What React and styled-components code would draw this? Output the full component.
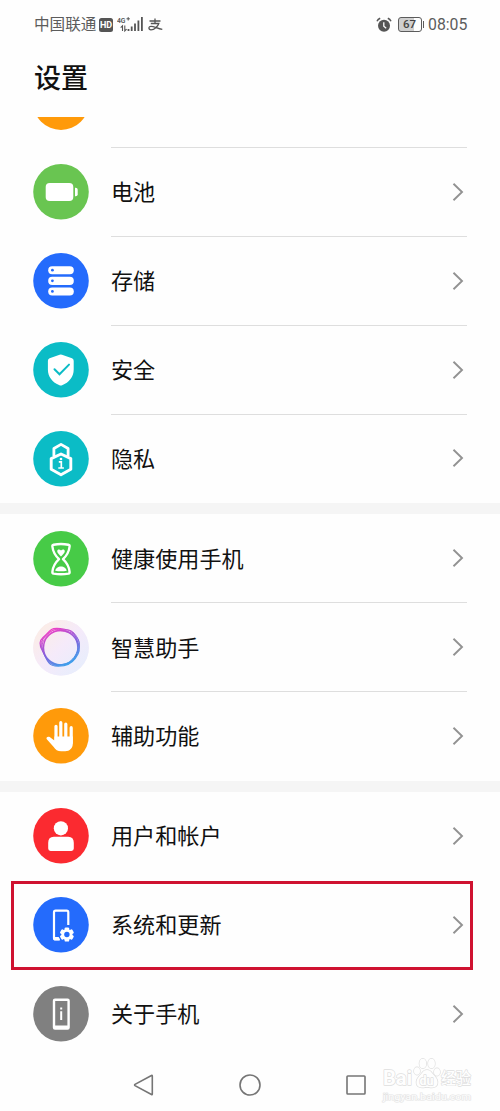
import React from 'react';
import styled, { createGlobalStyle } from 'styled-components';

const GlobalStyle = createGlobalStyle`
	* {
		box-sizing: border-box;
	}
	body {
		margin: 0;
		background: #fefefe;
		font-family: Roboto, 'Noto Sans CJK SC', sans-serif;
	}
	svg {
		display: block;
		flex: none;
	}
`;

const BatteryIcon = () => (
	<g fill='#fff'>
		<rect x='12.7' y='19' width='27.6' height='18' rx='4' />
		<path d='M42 23.7h.7q2 0 2 2v4.6q0 2-2 2h-.7z' />
	</g>
);

const StorageIcon = () => (
	<>
		{[13.2, 23.8, 34.4].map((y) => (
			<g key={y}>
				<rect x='15.2' y={y} width='25.6' height='8.1' rx='4' fill='#fff' />
				<circle cx='19.4' cy={y + 4} r='1.4' fill='#246bfc' />
			</g>
		))}
	</>
);

const ShieldIcon = () => (
	<>
		<path
			d='M26.6 12.7q1.2-.6 2.4 0l10 3.6q1.7.6 1.7 2.4v8.8c0 7.4-4.6 12.9-11.6 15.8q-1.3.5-2.6 0C19.5 40.4 14.9 34.9 14.9 27.5v-8.8q0-1.8 1.7-2.4z'
			fill='#fff'
		/>
		<path
			d='M21.5 27.3l5 5L36 22.6'
			fill='none'
			stroke='#0bbcc6'
			strokeWidth='2'
			strokeLinecap='round'
		/>
	</>
);

const PrivacyIcon = () => (
	<g fill='none' stroke='#fff' strokeWidth='2.8' strokeLinejoin='round'>
		<path d='M20.9 25v-7.5L28 13.4l7.1 4.1V25' />
		<path d='M28 23l9.8 4.6v10.6L28 43.7l-9.8-5.5V27.6z' strokeWidth='2.9' />
		<path d='M25.8 30.9h2.5v6M25.3 37h5.6' strokeWidth='1.7' strokeLinejoin='miter' />
		<circle cx='28' cy='28' r='1.3' fill='#fff' stroke='none' />
	</g>
);

const HourglassIcon = () => (
	<>
		<path
			d='M20.6 13.7Q28 12.3 35.4 13.7Q36.8 14 36.6 15.5C36 21.5 33 25.3 30 28.2C33 31 36 35 36.6 40.8Q36.8 42.3 35.4 42.6Q28 43.9 20.6 42.6Q19.2 42.3 19.4 40.8C20 35 23 31 26 28.2C23 25.3 20 21.5 19.4 15.5Q19.2 14 20.6 13.7z'
			fill='none'
			stroke='#fff'
			strokeWidth='2.4'
			strokeLinejoin='round'
		/>
		<path
			d='M28 25.5c-1-1.5-3.8-3.2-3.8-5.3 0-2 2.5-2.3 3.8-.6 1.3-1.7 3.8-1.4 3.8.6 0 2.1-2.8 3.8-3.8 5.3zM22.3 39.8c0-2.1 3-4.2 5.7-4.2s5.7 2.1 5.7 4.2q-5.7 1-11.4 0z'
			fill='#fff'
		/>
	</>
);

const AssistantIcon = () => (
	<>
		<defs>
			<linearGradient id='orb' x1='0' y1='0' x2='1' y2='1'>
				<stop offset='0' stopColor='#fdeee0' />
				<stop offset='.5' stopColor='#f5eafa' />
				<stop offset='1' stopColor='#e3effd' />
			</linearGradient>
			<linearGradient id='ring' gradientUnits='userSpaceOnUse' x1='17' y1='10' x2='36' y2='46'>
				<stop offset='0' stopColor='#ee3fc6' />
				<stop offset='.5' stopColor='#8560dc' />
				<stop offset='1' stopColor='#35a5ec' />
			</linearGradient>
		</defs>
		<circle cx='28' cy='27.8' r='27.8' fill='url(#orb)' />
		<g fill='none' stroke='url(#ring)' strokeWidth='.9'>
			<circle cx='27.7' cy='27.7' r='17.2' strokeWidth='1.4' />
			<path
				d='M18.5 9.5C22 7 28 8.5 33 9.5C39 10.5 42 14 43.5 19C46 25 47.5 29 45 34C42 40 38 44.5 31 45.7C25 46.5 19 47 16 43C13 39 12 35 9.5 31C6.5 26 6 21 10 17.5C14 14 15 12 18.5 9.5z'
				strokeWidth='1.2'
			/>
			<path d='M17 12C22 8 29 10 34 9.800C40 10 43 15 45.500 20C48 26 44.500 33 42.500 37C39 42 35 46 28 44.500C22 45.500 18 44.500 14.500 40C11.500 36 10.500 32 8.500 27C6.500 21 12 15 17 12z' />
			<path d='M19.5 10.5C24 8 30 9.5 35 11.5C40 13 45 17 46.2 23C47 29 43 35 40 40C36 44 29 44 24 45.6C18 45 14 41 12 36C9 30 8 25 9.5 20C12 16 16 13 19.5 10.5z' />
			<path d='M20 12C25 9.5 30 11 35 12.3C40 14 44.5 19 45 25C45.5 31 42 37 38 40.5C34 44.5 28 46.5 22 44.5C16 43 13 38 10.5 33C8 27 9 22 12.5 18C14.5 15 17 13.5 20 12z' />
		</g>
	</>
);

const HandIcon = () => (
	<>
		<path
			d='M23 18.3v15M27.8 14.7v15M32.8 16v15M38.2 19.7v15'
			stroke='#fff'
			strokeWidth='3.2'
			strokeLinecap='round'
		/>
		<path
			d='M21.4 28.5h18.4v7c0 4.7-3 7.7-7.6 7.7h-4c-3.6 0-5.8-1.5-7.5-4.3L13.8 31.3c-1.2-1.7.9-3.4 2.9-2.3l4.7 3.5z'
			fill='#fff'
		/>
	</>
);

const UserIcon = () => (
	<g fill='#fff'>
		<circle cx='27.9' cy='20.3' r='7.1' />
		<path d='M20.8 28.8h14.4q5.6 0 5.6 6v5.8q0 2.4-2.4 2.4H17.6q-2.4 0-2.4-2.4v-5.8q0-6 5.6-6z' />
	</g>
);

const SystemIcon = () => (
	<>
		<path
			d='M35.3 28V15.2q0-1.6-1.6-1.6H22.6q-1.6 0-1.6 1.6v25.7q0 1.6 1.6 1.6H26.5'
			fill='none'
			stroke='#fff'
			strokeWidth='2.2'
		/>
		<path d='M20.5 40h5.2l1.5 3.3h-5.2q-1.5 0-1.5-1.5z' fill='#fff' />
		{[0, 60, 120].map((deg) => (
			<rect
				key={deg}
				x='31.6'
				y='30.4'
				width='4.6'
				height='14.2'
				rx='1.2'
				fill='#fff'
				transform={`rotate(${deg} 33.9 37.5)`}
			/>
		))}
		<circle cx='33.9' cy='37.5' r='5.5' fill='#fff' />
		<circle cx='33.9' cy='37.5' r='2.7' fill='#246bfc' />
	</>
);

const AboutIcon = () => (
	<>
		<path
			fillRule='evenodd'
			d='M22 12.5h12.6q2.2 0 2.2 2.2v26.8q0 2.2-2.2 2.2H22q-2.2 0-2.2-2.2V14.7q0-2.2 2.2-2.2zM22.2 15v24.6h12.2V15z'
			fill='#fff'
		/>
		<path d='M27.2 25.2h2V34h-2zM27.2 21.6h2v2h-2z' fill='#fff' />
	</>
);

const groups = [
	[
		{ label: '电池', color: '#69c551', icon: BatteryIcon },
		{ label: '存储', color: '#246bfc', icon: StorageIcon },
		{ label: '安全', color: '#0bbcc6', icon: ShieldIcon },
		{ label: '隐私', color: '#0bbcc6', icon: PrivacyIcon },
	],
	[
		{ label: '健康使用手机', color: '#47cb47', icon: HourglassIcon },
		{ label: '智慧助手', color: '#f5eafa', icon: AssistantIcon },
		{ label: '辅助功能', color: '#ff9a0a', icon: HandIcon },
	],
	[
		{ label: '用户和帐户', color: '#fb2a30', icon: UserIcon, plain: true },
		{ label: '系统和更新', color: '#246bfc', icon: SystemIcon, plain: true, marked: true },
		{ label: '关于手机', color: '#808080', icon: AboutIcon, plain: true },
	],
];

function Status() {
	return (
		<StatusBar>
			<StatusGroup>
				<Carrier>中国联通</Carrier>
				<HdBadge>HD</HdBadge>
				<svg width='27' height='17' viewBox='0 0 27 17'>
					<text x='0' y='6.8' fontSize='8' fontWeight='600' fill='#555' textLength='8.5' lengthAdjust='spacingAndGlyphs'>4G</text>
					<path d='M9.5 2.8h3.4M11.2 1.1v3.4' stroke='#555' strokeWidth='1' />
					<path d='M5.500 15V9.800l-1.800 1.800M7.800 9.600V15l1.800-1.800' fill='none' stroke='#555' strokeWidth='1.1' />
					<path d='M11.5 15v-2M14.7 15v-4.5M18 15V7.5M21.4 15V4.5M24.9 15V1' stroke='#555' strokeWidth='1.8' />
				</svg>
				<PayMark width='15' height='13' viewBox='0 0 15 13'>
					<path d='M1.5 3h11M7 .6V5.5M2.8 5.5h8C9.8 8.5 6.5 11.8 3 11.8 .3 11.8 .2 8.3 3 8.3 6.2 8.3 9.5 10.6 14.3 11.3' />
				</PayMark>
			</StatusGroup>
			<StatusGroup>
				<svg width='16' height='16' viewBox='0 0 16 16'>
					<circle cx='8' cy='8.8' r='6' fill='#555' />
					<path d='M1 4.3Q2 2.2 4.2 1.3M15 4.3Q14 2.2 11.8 1.3' fill='none' stroke='#555' strokeWidth='1.5' />
					<path d='M7.8 5.3v3.9l2.4 2' fill='none' stroke='#fff' strokeWidth='1.3' />
				</svg>
				<Battery>
					<BatteryBody>67</BatteryBody>
					<BatteryTip />
				</Battery>
				<Time>08:05</Time>
			</StatusGroup>
		</StatusBar>
	);
}

function SettingRow({ item, last }) {
	const Icon = item.icon;
	return (
		<Row>
			<svg width='56' height='56' viewBox='0 0 56 56'>
				<circle cx='28' cy='27.8' r='27.8' fill={item.color} />
				<Icon />
			</svg>
			<RowBody $divider={!last && !item.plain}>
				<Label>{item.label}</Label>
				<svg width='12' height='20' viewBox='0 0 12 20'>
					<path d='M1.5 1.8L10 10l-8.5 8.2' fill='none' stroke='#929292' strokeWidth='1.9' />
				</svg>
			</RowBody>
			{item.marked && <Marker />}
		</Row>
	);
}

function Watermark() {
	return (
		<WatermarkBox>
			<svg width='94' height='50' viewBox='0 0 94 50'>
				<g fill='#fefefe' stroke='#dedede' strokeWidth='1.4' paintOrder='stroke' strokeLinejoin='round'>
					<text x='2' y='30.5' fontSize='20' fontWeight='700' textLength='29' lengthAdjust='spacingAndGlyphs'>Bai</text>
					<ellipse cx='36' cy='17' rx='3' ry='3.8' />
					<ellipse cx='41.8' cy='9.5' rx='3.4' ry='4.7' />
					<ellipse cx='50.5' cy='9.5' rx='3.4' ry='4.7' />
					<ellipse cx='56' cy='18' rx='3' ry='3.8' />
					<path d='M46 16c4 0 5 3.5 8 6.5 4 4.5 3.5 11-3 11-2.5 0-3.500-.5-5-.5s-2.500.5-5 .5c-6.500 0-7-6.500-3-11 3-3 4-6.500 8-6.500z' />
					<text x='38.5' y='30.5' fontSize='13' fontWeight='700' textLength='14' lengthAdjust='spacingAndGlyphs'>du</text>
					<text x='60' y='30' fontSize='16' fontWeight='500' textLength='30' lengthAdjust='spacingAndGlyphs'>经验</text>
				</g>
				<text x='2' y='45.5' fontSize='9' fill='#fefefe' stroke='#e4e4e4' strokeWidth='1.2' paintOrder='stroke' textLength='88' lengthAdjust='spacingAndGlyphs'>jingyan.baidu.com</text>
			</svg>
		</WatermarkBox>
	);
}

export default function App() {
	return (
		<Screen>
			<GlobalStyle />
			<Status />
			<Title>设置</Title>
			<CutRow>
				<CutIcon />
				<CutBody />
			</CutRow>
			{groups.map((items, i) => (
				<Group key={i}>
					{items.map((item, n) => (
						<SettingRow key={item.label} item={item} last={n === items.length - 1} />
					))}
				</Group>
			))}
			<NavBar>
				<svg width='22' height='24' viewBox='0 0 22 24'>
					<path d='M19.5 2.5q.8-.4.8.6v17.8q0 1-.8.6L3 12.6q-.8-.6 0-1.2z' />
				</svg>
				<svg width='24' height='24' viewBox='0 0 24 24'>
					<circle cx='12' cy='12' r='10' />
				</svg>
				<svg width='22' height='24' viewBox='0 0 22 24'>
					<rect x='2' y='3' width='18' height='18' rx='.8' />
				</svg>
			</NavBar>
			<Watermark />
		</Screen>
	);
}

const Screen = styled.main`
	position: relative;
	width: 500px;
	height: 1111px;
	overflow: hidden;
	display: flex;
	flex-direction: column;
	background: #fefefe;
	color: #111;
`;

const StatusBar = styled.header`
	flex: none;
	height: 48px;
	padding: 1px 33px 0 34px;
	display: flex;
	align-items: center;
	justify-content: space-between;
	color: #5c5c5c;
`;

const StatusGroup = styled.div`
	display: flex;
	align-items: center;
`;

const Carrier = styled.span`
	width: 63px;
	padding-top: 1px;
	font-size: 15.6px;
	line-height: 20px;
	white-space: nowrap;
`;

const HdBadge = styled.span`
	width: 14px;
	height: 14px;
	margin: 0 4px 0 2px;
	border-radius: 2.5px;
	background: #555;
	color: #fff;
	font-size: 9px;
	font-weight: 700;
	line-height: 14px;
	text-align: center;
`;

const PayMark = styled.svg`
	margin-left: 4px;
	fill: none;
	stroke: #555;
	stroke-width: 1.3;
`;

const Battery = styled.div`
	display: flex;
	align-items: center;
	margin: 0 4px 0 6px;
`;

const BatteryBody = styled.span`
	width: 24px;
	height: 15px;
	border: 1.5px solid #5c5c5c;
	border-radius: 3px;
	background: linear-gradient(90deg, #cfcfcf 67%, #fefefe 67%);
	color: #444;
	font-size: 11.5px;
	font-weight: 500;
	line-height: 13px;
	text-align: center;
`;

const BatteryTip = styled.span`
	width: 1.5px;
	height: 7px;
	margin-left: 1px;
	background: #5c5c5c;
`;

const Time = styled.span`
	width: 39px;
	padding-top: 1px;
	font-size: 15.8px;
	line-height: 20px;
`;

const Title = styled.h1`
	flex: none;
	height: 68.5px;
	margin: 0;
	padding: 11px 0 0 34px;
	font-size: 27px;
	font-weight: 500;
	line-height: 40px;
`;

const CutRow = styled.div`
	flex: none;
	display: flex;
	height: 31.5px;
	padding: 0 33px;
	gap: 22px;
	overflow: hidden;
`;

const CutIcon = styled.span`
	width: 56px;
	height: 56px;
	margin-top: -42.5px;
	border-radius: 50%;
	background: #ff9a0a;
`;

const CutBody = styled.span`
	flex: 1;
	border-bottom: 1px solid #dedede;
`;

const Group = styled.section`
	flex: none;

	& + & {
		border-top: 11px solid #f5f5f5;
	}
`;

const Row = styled.div`
	position: relative;
	display: flex;
	align-items: center;
	height: 88.85px;
	padding: 0 33px;
	gap: 22px;
`;

const RowBody = styled.div`
	flex: 1;
	align-self: stretch;
	display: flex;
	align-items: center;
	justify-content: space-between;
	padding-right: 3px;
	border-bottom: 1px solid ${({ $divider }) => ($divider ? '#dedede' : 'transparent')};
`;

const Label = styled.span`
	padding-top: 1px;
	font-size: 22.1px;
	line-height: 32px;
`;

const Marker = styled.span`
	position: absolute;
	top: 0;
	left: 11px;
	right: 27px;
	bottom: 0;
	border: 3px solid #cf1230;
`;

const NavBar = styled.nav`
	flex: 1;
	display: flex;
	justify-content: space-between;
	padding: 14.5px 133px 0 132px;

	svg {
		fill: none;
		stroke: #757575;
		stroke-width: 1.6;
	}
`;

const WatermarkBox = styled.div`
	position: absolute;
	left: 381px;
	top: 1054px;
`;
